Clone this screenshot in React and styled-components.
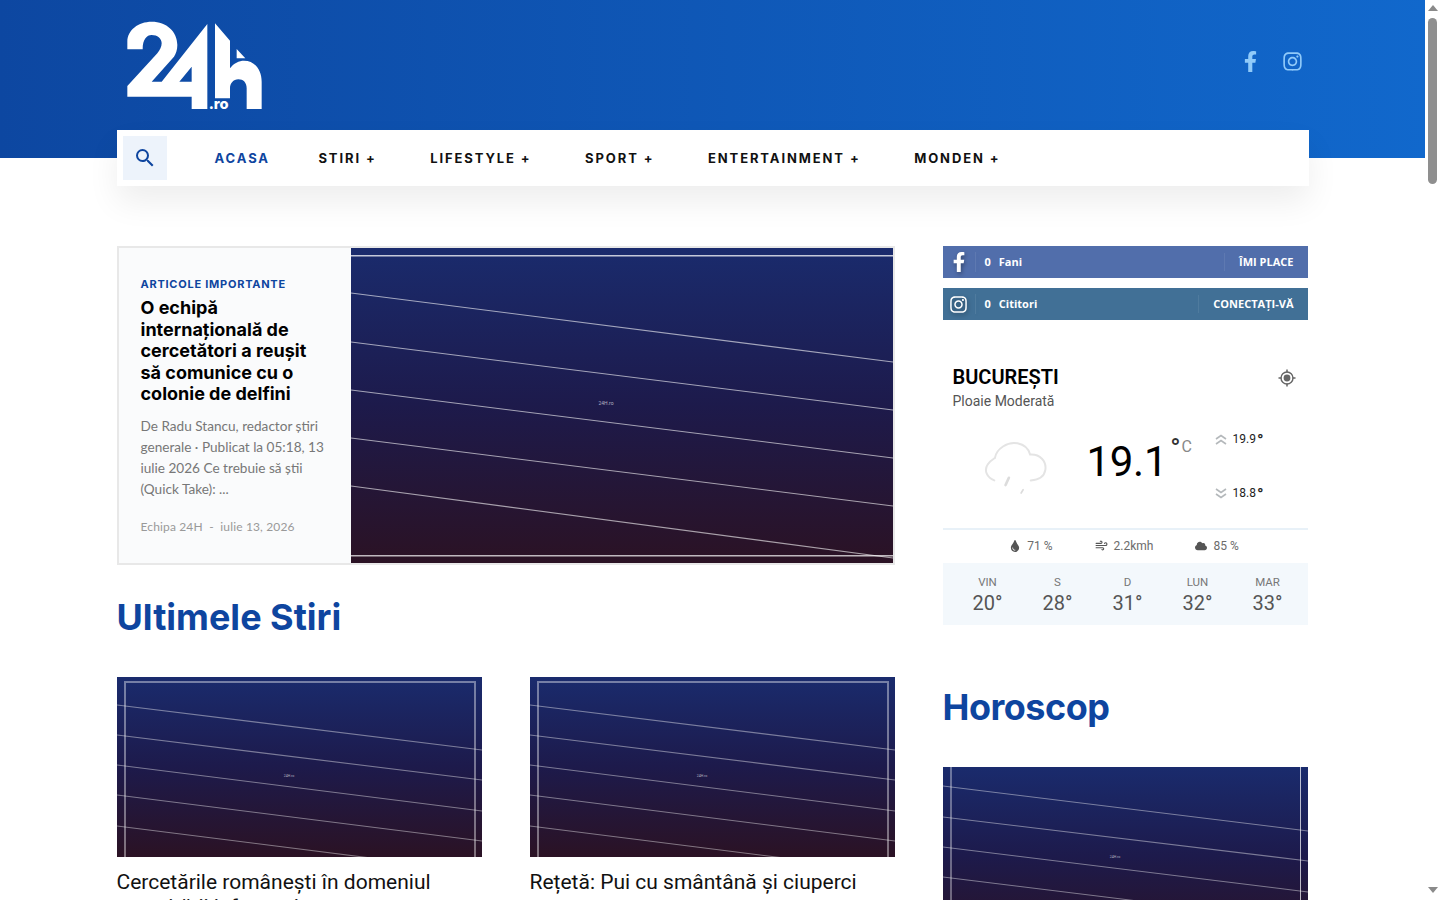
import React from 'react'
import styled, { createGlobalStyle } from 'styled-components'
import { FaFacebookF, FaInstagram, FaTint, FaCloud } from 'react-icons/fa'
import { MdSearch } from 'react-icons/md'
import { Wind } from 'lucide-react'

const GlobalStyle = createGlobalStyle`
  body {
    margin: 0;
    background: #fff;
    color: #000;
    font-family: Lato, "Open Sans", sans-serif;
  }
`

const HEADING_FONT = 'Inter, Lato, sans-serif'
const BRAND = '#0e459f'

const navItems = ['STIRI +', 'LIFESTYLE +', 'SPORT +', 'ENTERTAINMENT +', 'MONDEN +']

const forecast = [
  { day: 'VIN', temp: '20°' },
  { day: 'S', temp: '28°' },
  { day: 'D', temp: '31°' },
  { day: 'LUN', temp: '32°' },
  { day: 'MAR', temp: '33°' },
]

const heroLines = [
  [45, 114],
  [94, 162],
  [142, 210],
  [190, 258],
  [238, 310],
]

const cardLines = [
  [28, 73],
  [58, 103],
  [88, 134],
  [118, 164],
  [149, 195],
]

const sideLines = [
  [19, 64],
  [50, 94],
  [80, 125],
  [110, 155],
  [141, 186],
]

const Page = styled.div`
  width: 1425px;
  min-height: 4717px;
`

const ScrollRail = styled.div`
  position: fixed;
  top: 0;
  right: 0;
  bottom: 0;
  display: flex;
  flex-direction: column;
  align-items: center;
  width: 15px;
  padding: 5px 0 7px;
  box-sizing: border-box;
  background: #fff;
`

const ScrollThumb = styled.div`
  width: 9px;
  height: 166px;
  margin-top: 7px;
  border-radius: 5px;
  background: #8f8f8f;
`

const ScrollArrow = styled.div`
  width: 0;
  height: 0;
  border-left: 5px solid transparent;
  border-right: 5px solid transparent;
  ${(p) => (p.$down ? 'border-top: 6px solid #8a8a8a; margin-top: auto;' : 'border-bottom: 6px solid #8a8a8a;')}
`

const Band = styled.header`
  height: 158px;
  background: linear-gradient(90deg, #0d47a1 0%, #1168cc 100%);
`

const Container = styled.div`
  width: 1192px;
  margin: 0 auto;
`

const BandInner = styled(Container)`
  display: flex;
  align-items: flex-start;
  justify-content: space-between;
  padding-top: 10px;
`

const LogoLink = styled.a`
  display: block;
  width: 150px;
  height: 110px;
  margin-left: 3px;
`

const HeaderSocials = styled.div`
  display: flex;
  gap: 21px;
  align-items: center;
  margin-top: 41px;
  padding-right: 6px;
  color: #90caf9;
  font-size: 21px;
  line-height: 0;
`

const NavBar = styled(Container)`
  position: relative;
  display: flex;
  align-items: center;
  height: 56px;
  margin-top: -28px;
  padding-left: 6px;
  box-sizing: border-box;
  background: #fff;
  box-shadow: 0 16px 32px rgba(0, 0, 0, 0.07);
`

const SearchButton = styled.button`
  display: flex;
  align-items: center;
  justify-content: center;
  width: 44px;
  height: 44px;
  margin-right: 48px;
  padding: 0;
  border: 0;
  background: #edf3fb;
  color: ${BRAND};
  font-size: 24px;
`

const NavLinks = styled.nav`
  display: flex;
  gap: 53.5px;
`

const NavLink = styled.a`
  margin-right: ${(p) => (p.$active ? '-5px' : '0')};
  color: ${(p) => (p.$active ? BRAND : '#111')};
  font-family: ${HEADING_FONT};
  font-size: 13px;
  font-weight: 700;
  letter-spacing: 1.9px;
  line-height: 16px;
  white-space: nowrap;
`

const Main = styled(Container)`
  display: grid;
  grid-template-columns: 778px 365px;
  column-gap: 48px;
  padding-top: 60px;
`

const Hero = styled.article`
  display: grid;
  grid-template-columns: 232px 542px;
  height: 319px;
  box-sizing: border-box;
  border: 2px solid #e8e8e8;
  background: #fafbfc;
`

const HeroText = styled.div`
  padding: 29px 22px 0 22px;
`

const Kicker = styled.div`
  color: ${BRAND};
  font-family: ${HEADING_FONT};
  font-size: 11px;
  font-weight: 700;
  letter-spacing: 0.75px;
  line-height: 14px;
`

const HeroTitle = styled.h2`
  max-width: 182px;
  margin: 6px 0 0;
  color: #000;
  font-family: ${HEADING_FONT};
  font-size: 18px;
  font-weight: 700;
  line-height: 21.6px;
`

const HeroExcerpt = styled.p`
  margin: 11px 0 0;
  color: #777;
  font-family: Lato, sans-serif;
  font-size: 13.6px;
  line-height: 21px;
`

const HeroMeta = styled.div`
  margin-top: 19px;
  color: #999;
  font-family: Lato, sans-serif;
  font-size: 12px;
  letter-spacing: 0.15px;
  line-height: 16px;
  white-space: pre;
`

const SectionTitle = styled.h2`
  margin: 0;
  color: ${BRAND};
  font-family: ${HEADING_FONT};
  font-size: 36px;
  font-weight: 700;
  line-height: 44px;
`

const LatestTitle = styled(SectionTitle)`
  margin: 30px 0 38px;
`

const CardGrid = styled.div`
  display: grid;
  grid-template-columns: 365px 365px;
  column-gap: 48px;
`

const CardTitle = styled.h3`
  margin: 13px 0 0;
  color: #111;
  font-family: Roboto, sans-serif;
  font-size: 21px;
  font-weight: 400;
  line-height: 25px;
`

const CoverSvg = styled.svg`
  display: block;
`

const SocialRow = styled.a`
  display: flex;
  align-items: center;
  height: 32px;
  margin-bottom: 10px;
  padding-right: 14px;
  background: ${(p) => p.$color};
  color: #fff;
  font-family: "Open Sans", sans-serif;
  font-size: 11px;
  font-weight: 700;
  line-height: 18px;
`

const SocialIcon = styled.span`
  display: flex;
  align-items: center;
  justify-content: center;
  width: 32px;
  height: 20px;
  margin-right: 9px;
  border-right: 1px solid rgba(255, 255, 255, 0.08);
  font-size: ${(p) => p.$size}px;
  filter: drop-shadow(1px 2px 2px rgba(0, 0, 0, 0.35));
`

const SocialCount = styled.span`
  margin-right: 8px;
`

const SocialAction = styled.span`
  margin-left: auto;
  padding-left: 14px;
  border-left: 1px solid rgba(255, 255, 255, 0.08);
`

const Weather = styled.section`
  margin-top: 46px;
`

const WeatherHead = styled.div`
  display: flex;
  align-items: flex-start;
  justify-content: space-between;
  padding: 0 12px 0 10px;
`

const City = styled.div`
  color: #000;
  font-family: Roboto, sans-serif;
  font-size: 20px;
  font-weight: 600;
  line-height: 22px;
`

const Condition = styled.div`
  margin-top: 4px;
  color: #555;
  font-family: Roboto, sans-serif;
  font-size: 14px;
  line-height: 18px;
`

const LocateIcon = styled.svg`
  margin-top: 3px;
`

const WeatherBody = styled.div`
  display: grid;
  grid-template-columns: 144px 128px 1fr;
  height: 89px;
  padding-bottom: 10px;
  border-bottom: 2px solid #e8f1f8;
  margin-top: 19px;
`

const CloudWrap = styled.div`
  padding: 10px 0 0 39px;
`

const TempCell = styled.div`
  display: flex;
  align-items: flex-start;
  padding-top: 8px;
  font-family: Roboto, sans-serif;
`

const TempValue = styled.span`
  color: #000;
  font-size: 42px;
  line-height: 50px;
  letter-spacing: -0.3px;
`

const TempUnit = styled.span`
  display: flex;
  align-items: flex-start;
  margin: 0 0 0 3px;
  color: #888;
  font-size: 16px;
  line-height: 20px;
  white-space: nowrap;
`

const TempDegree = styled.b`
  margin-right: 1px;
  color: #333;
  font-size: 27px;
  font-weight: 500;
  line-height: 24px;
`

const RangeCell = styled.div`
  display: flex;
  flex-direction: column;
  gap: 37px;
  padding-top: 2px;
`

const RangeRow = styled.div`
  display: flex;
  align-items: center;
  gap: 6px;
  color: #222;
  font-family: Roboto, sans-serif;
  font-size: 12px;
  line-height: 17px;
`

const RangeDegree = styled.b`
  margin-left: -5px;
  font-size: 17px;
  font-weight: 700;
  line-height: 14px;
`

const Stats = styled.div`
  display: flex;
  justify-content: center;
  gap: 42px;
  height: 31px;
  align-items: center;
  padding: 0 2px 2px 0;
`

const Stat = styled.div`
  display: flex;
  align-items: center;
  gap: 6px;
  color: #6b6b6b;
  font-family: Roboto, sans-serif;
  font-size: 12px;

  svg {
    color: #555;
    font-size: 12px;
  }
`

const Forecast = styled.div`
  display: grid;
  grid-template-columns: repeat(5, 70px);
  justify-content: center;
  height: 62px;
  box-sizing: border-box;
  padding: 13px 0 0 5px;
  background: #f3f8fc;
`

const Day = styled.div`
  text-align: center;
  font-family: Roboto, sans-serif;
`

const DayName = styled.div`
  color: #777;
  font-size: 11.5px;
  line-height: 13px;
`

const DayTemp = styled.div`
  margin-top: 2px;
  color: #555;
  font-size: 20px;
  line-height: 24px;
`

const HoroscopeTitle = styled(SectionTitle)`
  margin: 60px 0 38px;
  letter-spacing: -0.5px;
`

// Placeholder picture the site uses on every article: gradient, frame and slanted lines
const Cover = ({ id, width, height, lines, lineOpacity, textX, textY, textSize, frame }) => (
  <CoverSvg width={width} height={height} viewBox={`0 0 ${width} ${height}`}>
    <defs>
      <linearGradient id={id} x1="0" y1="0" x2="0" y2="1">
        <stop offset="0" stopColor="#1a2b6d" />
        <stop offset="0.5" stopColor="#1d1a4b" />
        <stop offset="1" stopColor="#2b1224" />
      </linearGradient>
    </defs>
    <rect width={width} height={height} fill={`url(#${id})`} />
    {lines.map(([a, b]) => (
      <line key={a} x1="0" y1={a} x2={width} y2={b} stroke="#fff" strokeOpacity={lineOpacity} strokeWidth="1.1" />
    ))}
    {frame}
    <text x={textX} y={textY} fill="#fff" fillOpacity="0.65" fontSize={textSize} textAnchor="middle" fontFamily="Roboto, sans-serif">
      24H.ro
    </text>
  </CoverSvg>
)

const Logo = () => (
  <svg width="150" height="110" viewBox="60 30 450 330">
    <path
      fill="#fff"
      fillRule="evenodd"
      d="M82 148 L82 125 C82 90 115 65 155 65 C200 65 232 95 232 135 C232 150 228 160 222 170 L155 245 L185 245 L322 72 L322 327 L275 327 L275 290 L82 290 L82 258 L172 160 C180 150 185 140 185 130 C185 115 172 105 155 105 C140 105 128 118 128 148 Z M275 200 L275 245 L238 245 Z"
    />
    <path
      fill="#fff"
      d="M345 70 L390 122 L390 205 C400 190 418 182 432 182 C465 182 485 210 485 245 L485 327 L440 327 L440 265 C440 248 430 238 415 238 C400 238 390 250 390 265 L390 295 L345 295 Z M410 147 L436 175 L410 175 Z"
    />
    <text x="326" y="326" fill="#fff" fontSize="44" fontWeight="800" fontFamily="Inter, sans-serif">
      .ro
    </text>
  </svg>
)

const LocateGlyph = () => (
  <LocateIcon width="18" height="18" viewBox="0 0 18 18">
    <circle cx="9" cy="9" r="6" fill="none" stroke="#666" strokeWidth="1.4" />
    <circle cx="9" cy="9" r="3.4" fill="#666" />
    <path d="M9 0.5 V3.5 M9 14.5 V17.5 M0.5 9 H3.5 M14.5 9 H17.5" stroke="#666" strokeWidth="1.5" />
  </LocateIcon>
)

const CloudGlyph = () => (
  <svg width="68" height="58" viewBox="155 55 205 175">
    <path
      d="M192 180 C170 172 160 150 172 132 C178 122 188 116 194 112 C198 85 232 62 262 68 C282 72 296 86 300 102 C330 100 350 122 346 148 C343 168 325 178 302 180"
      fill="none"
      stroke="#e4e4e4"
      strokeWidth="6"
      strokeLinecap="round"
    />
    <path d="M226 194 L236 172" stroke="#dcdcdc" strokeWidth="8" strokeLinecap="round" />
    <path d="M273 218 L279 208" stroke="#dcdcdc" strokeWidth="5" strokeLinecap="round" />
  </svg>
)

const DoubleChevron = ({ down }) => (
  <svg width="12" height="11" viewBox="0 0 12 11" fill="none" stroke="#b4b8bb" strokeWidth="1.6">
    <path d={down ? 'M1 1 L6 4.5 L11 1 M1 6 L6 9.5 L11 6' : 'M1 5 L6 1.5 L11 5 M1 10 L6 6.5 L11 10'} />
  </svg>
)

const heroFrame = (
  <>
    <rect x="0" y="7" width="542" height="1.5" fill="#fff" fillOpacity="0.75" />
    <rect x="0" y="307" width="542" height="1.5" fill="#fff" fillOpacity="0.7" />
  </>
)

const cardFrame = (
  <rect x="8" y="5" width="350" height="190" fill="none" stroke="#fff" strokeOpacity="0.4" strokeWidth="2" />
)

const sideFrame = (
  <>
    <rect x="7.5" y="0" width="1" height="180" fill="#fff" fillOpacity="0.7" />
    <rect x="357" y="0" width="1" height="180" fill="#fff" fillOpacity="0.7" />
  </>
)

const App = () => (
  <Page>
    <GlobalStyle />
    <ScrollRail>
      <ScrollArrow />
      <ScrollThumb />
      <ScrollArrow $down />
    </ScrollRail>
    <Band>
      <BandInner>
        <LogoLink>
          <Logo />
        </LogoLink>
        <HeaderSocials>
          <FaFacebookF />
          <FaInstagram />
        </HeaderSocials>
      </BandInner>
    </Band>
    <NavBar>
      <SearchButton aria-label="Caută">
        <MdSearch />
      </SearchButton>
      <NavLinks>
        <NavLink $active>ACASA</NavLink>
        {navItems.map((item) => (
          <NavLink key={item}>{item}</NavLink>
        ))}
      </NavLinks>
    </NavBar>
    <Main>
      <div>
        <Hero>
          <HeroText>
            <Kicker>ARTICOLE IMPORTANTE</Kicker>
            <HeroTitle>O echipă internațională de cercetători a reușit să comunice cu o colonie de delfini</HeroTitle>
            <HeroExcerpt>
              De Radu Stancu, redactor știri generale · Publicat la 05:18, 13 iulie 2026 Ce trebuie să știi (Quick
              Take): ...
            </HeroExcerpt>
            <HeroMeta>Echipa 24H  -  iulie 13, 2026</HeroMeta>
          </HeroText>
          <Cover
            id="hero-cover"
            width={542}
            height={315}
            lines={heroLines}
            lineOpacity={0.6}
            textX={255}
            textY={157}
            textSize={5}
            frame={heroFrame}
          />
        </Hero>
        <LatestTitle>Ultimele Stiri</LatestTitle>
        <CardGrid>
          <article>
            <Cover id="card-a" width={365} height={180} lines={cardLines} lineOpacity={0.42} textX={172} textY={100} textSize={3.5} frame={cardFrame} />
            <CardTitle>Cercetările românești în domeniul securității informatice sunt recunoscute</CardTitle>
          </article>
          <article>
            <Cover id="card-b" width={365} height={180} lines={cardLines} lineOpacity={0.42} textX={172} textY={100} textSize={3.5} frame={cardFrame} />
            <CardTitle>Rețetă: Pui cu smântână și ciuperci</CardTitle>
          </article>
        </CardGrid>
      </div>
      <aside>
        <SocialRow $color="#516eab">
          <SocialIcon $size={20}>
            <FaFacebookF />
          </SocialIcon>
          <SocialCount>0</SocialCount>
          <span>Fani</span>
          <SocialAction>ÎMI PLACE</SocialAction>
        </SocialRow>
        <SocialRow $color="#417096">
          <SocialIcon $size={19}>
            <FaInstagram />
          </SocialIcon>
          <SocialCount>0</SocialCount>
          <span>Cititori</span>
          <SocialAction>CONECTAȚI-VĂ</SocialAction>
        </SocialRow>
        <Weather>
          <WeatherHead>
            <div>
              <City>BUCUREȘTI</City>
              <Condition>Ploaie Moderată</Condition>
            </div>
            <LocateGlyph />
          </WeatherHead>
          <WeatherBody>
            <CloudWrap>
              <CloudGlyph />
            </CloudWrap>
            <TempCell>
              <TempValue>19.1</TempValue>
              <TempUnit>
                <TempDegree>°</TempDegree>C
              </TempUnit>
            </TempCell>
            <RangeCell>
              <RangeRow>
                <DoubleChevron />
                19.9 <RangeDegree>°</RangeDegree>
              </RangeRow>
              <RangeRow>
                <DoubleChevron down />
                18.8 <RangeDegree>°</RangeDegree>
              </RangeRow>
            </RangeCell>
          </WeatherBody>
          <Stats>
            <Stat>
              <FaTint />
              71 %
            </Stat>
            <Stat>
              <Wind size={13} strokeWidth={2} />
              2.2kmh
            </Stat>
            <Stat>
              <FaCloud />
              85 %
            </Stat>
          </Stats>
          <Forecast>
            {forecast.map((d) => (
              <Day key={d.day}>
                <DayName>{d.day}</DayName>
                <DayTemp>{d.temp}</DayTemp>
              </Day>
            ))}
          </Forecast>
        </Weather>
        <HoroscopeTitle>Horoscop</HoroscopeTitle>
        <Cover id="side-a" width={365} height={180} lines={sideLines} lineOpacity={0.42} textX={172} textY={91} textSize={3.5} frame={sideFrame} />
      </aside>
    </Main>
  </Page>
)

export default App
